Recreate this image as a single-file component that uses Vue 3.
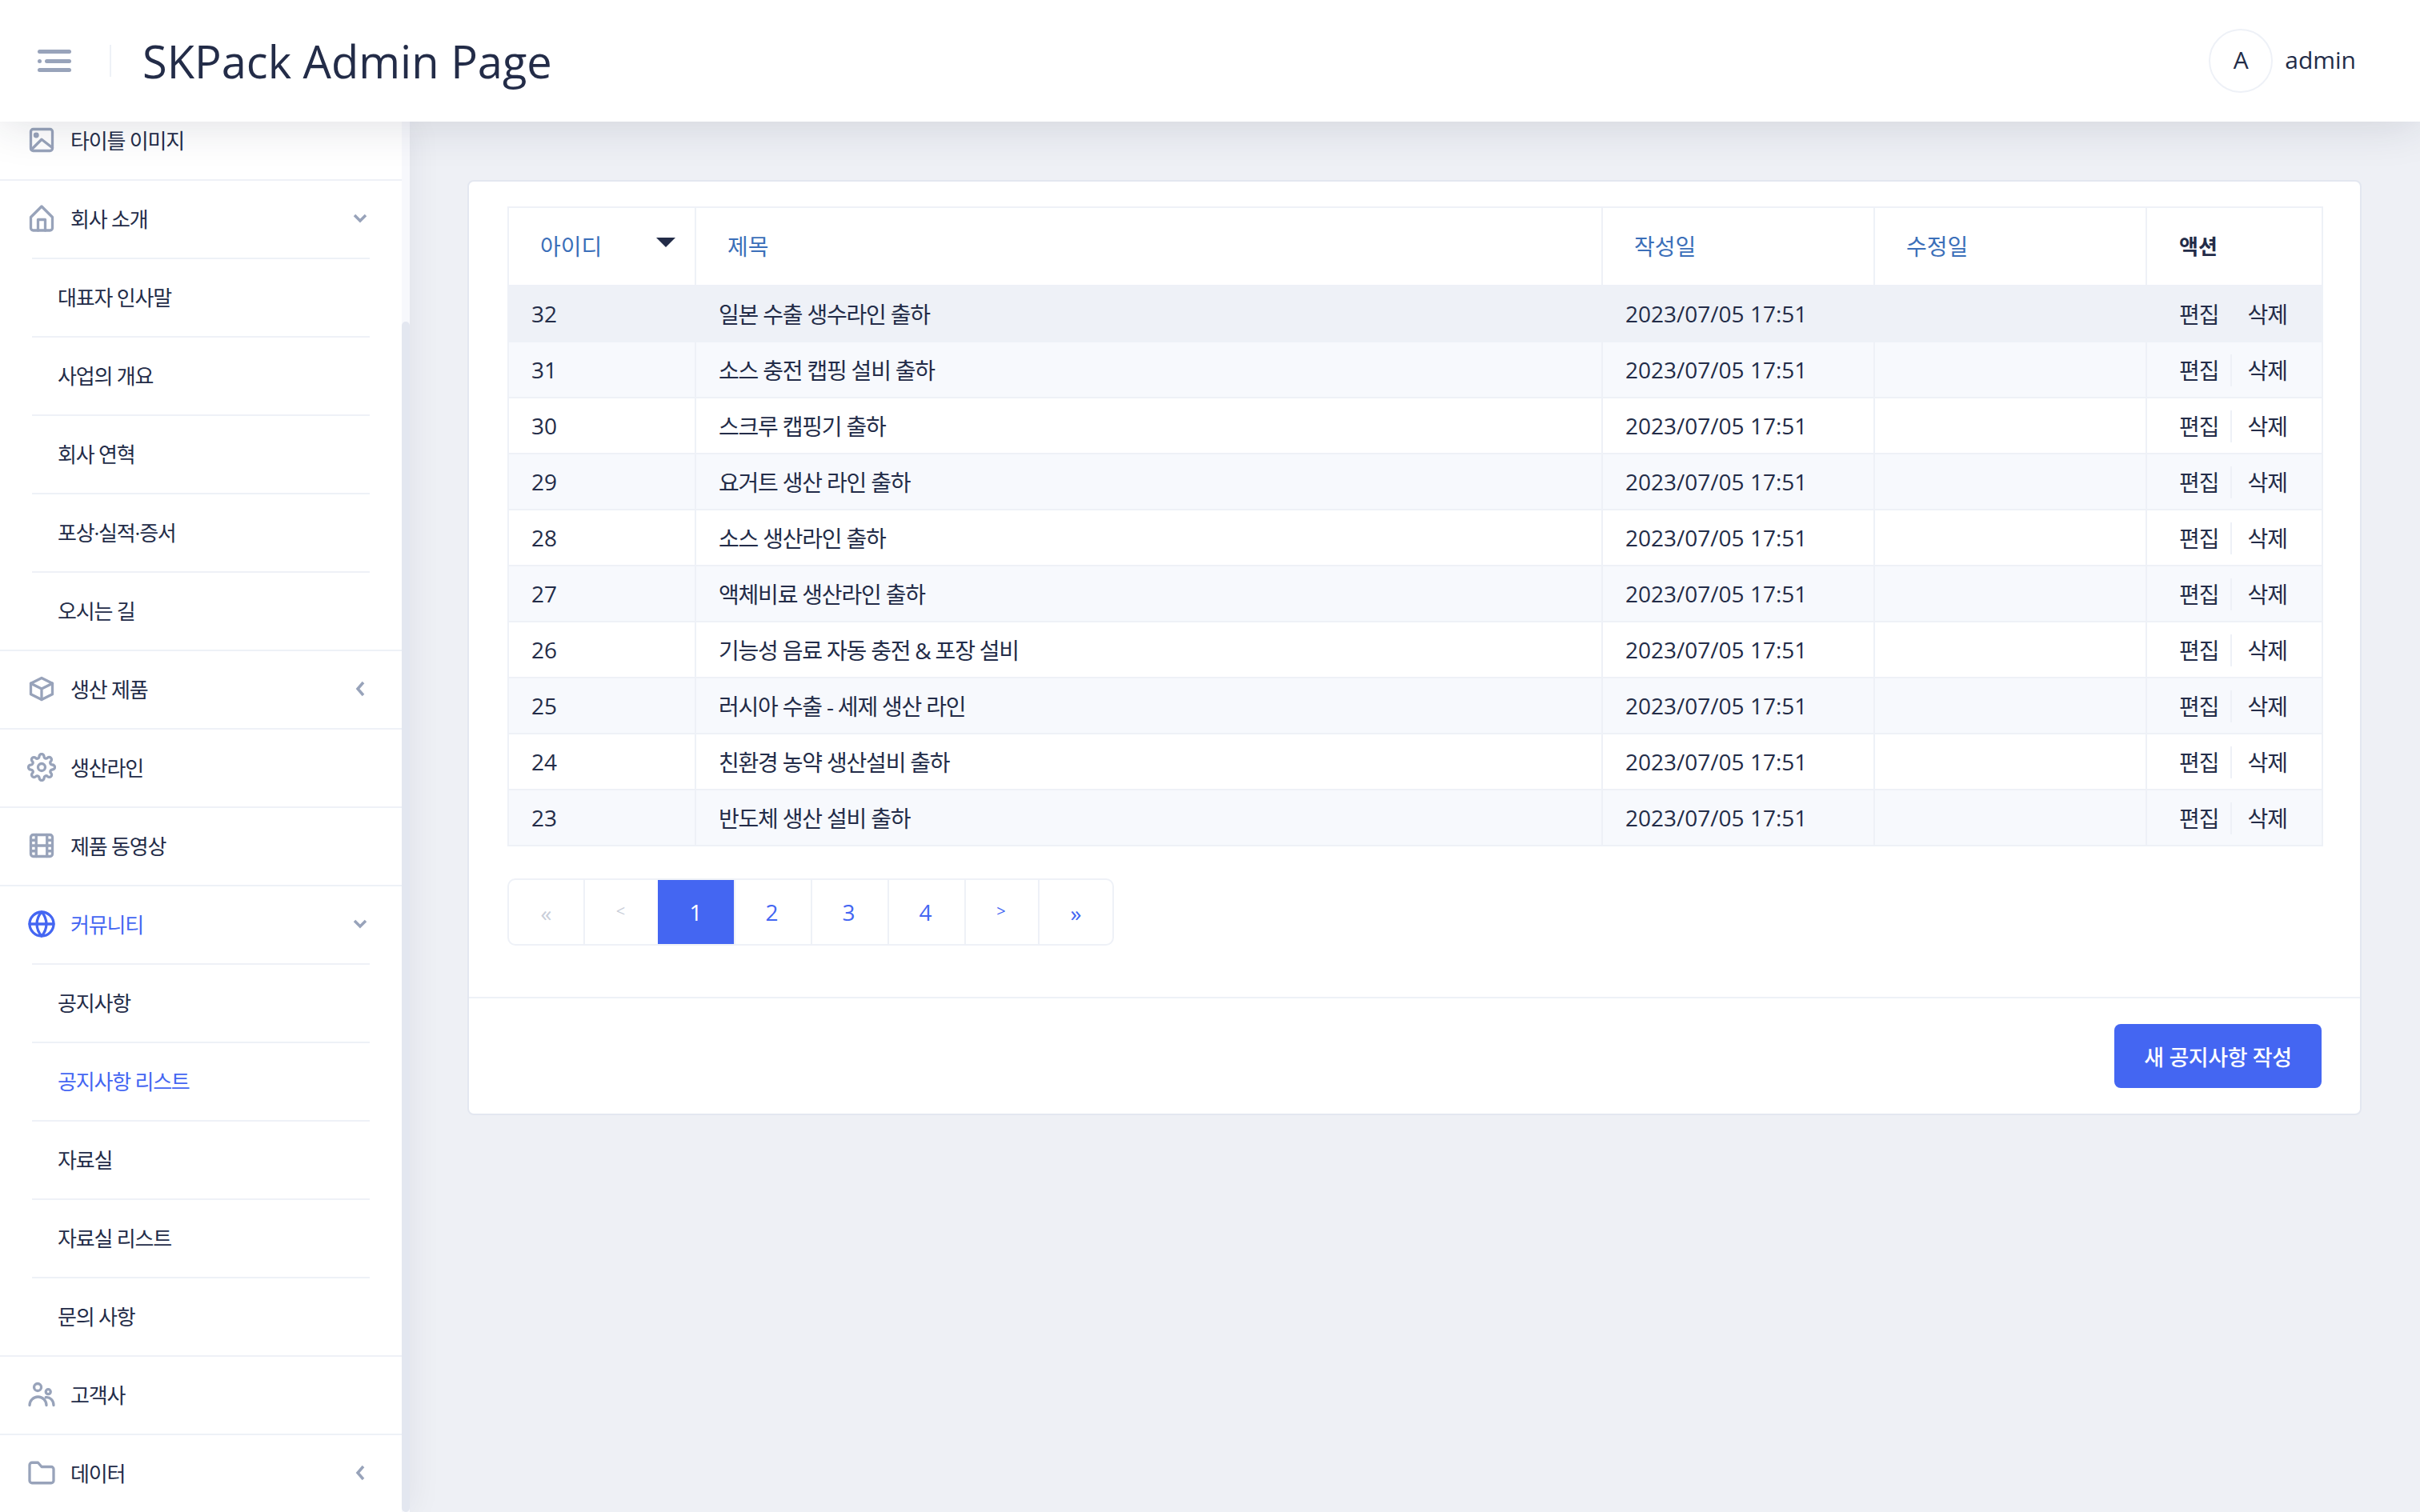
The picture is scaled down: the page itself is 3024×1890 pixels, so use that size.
<script setup>
const icons = {
  image: '<rect x="3" y="3" width="18" height="18" rx="2"/><circle cx="7.5" cy="8" r="1.2"/><path d="M3.5 20 12 11.5 21 18.5"/>',
  home: '<path d="M3 11 12 2l9 9v9a2 2 0 0 1-2 2H5a2 2 0 0 1-2-2z"/><path d="M9 22V13h6v9"/>',
  box: '<path d="M12 3l9 4.5v9L12 21l-9-4.5v-9z"/><path d="M3 7.5 12 12l9-4.5M12 12v9"/>',
  gear: '<circle cx="12" cy="12" r="3"/><path d="M19.4 15a1.65 1.65 0 0 0 .33 1.82l.06.06a2 2 0 0 1 0 2.83 2 2 0 0 1-2.83 0l-.06-.06a1.65 1.65 0 0 0-1.82-.33 1.65 1.65 0 0 0-1 1.51V21a2 2 0 0 1-2 2 2 2 0 0 1-2-2v-.09A1.65 1.65 0 0 0 9 19.4a1.65 1.65 0 0 0-1.82.33l-.06.06a2 2 0 0 1-2.83 0 2 2 0 0 1 0-2.83l.06-.06a1.65 1.65 0 0 0 .33-1.82 1.65 1.65 0 0 0-1.51-1H3a2 2 0 0 1-2-2 2 2 0 0 1 2-2h.09A1.65 1.65 0 0 0 4.6 9a1.65 1.65 0 0 0-.33-1.82l-.06-.06a2 2 0 0 1 0-2.83 2 2 0 0 1 2.83 0l.06.06a1.65 1.65 0 0 0 1.82.33H9a1.65 1.65 0 0 0 1-1.51V3a2 2 0 0 1 2-2 2 2 0 0 1 2 2v.09a1.65 1.65 0 0 0 1 1.51 1.65 1.65 0 0 0 1.82-.33l.06-.06a2 2 0 0 1 2.83 0 2 2 0 0 1 0 2.83l-.06.06a1.65 1.65 0 0 0-.33 1.82V9a1.65 1.65 0 0 0 1.51 1H21a2 2 0 0 1 2 2 2 2 0 0 1-2 2h-.09a1.65 1.65 0 0 0-1.51 1z"/>',
  film: '<rect x="3" y="3" width="18" height="18" rx="2"/><path d="M7.5 3v18M16.5 3v18M3 12h18M3 7.5h4.500M3 16.500h4.500M16.500 16.500H21M16.500 7.500H21"/>',
  globe: '<circle cx="12" cy="12" r="10"/><path d="M2 12h20M12 2a15.300 15.300 0 0 1 4 10 15.300 15.300 0 0 1-4 10 15.300 15.300 0 0 1-4-10 15.300 15.300 0 0 1 4-10z"/>',
  users: '<circle cx="8.700" cy="6" r="3"/><circle cx="17.500" cy="9.800" r="2"/><path d="M2 21a7 7 0 0 1 14 0M15.500 14.500c3.500-.5 6.500 2.500 6.500 6.500"/>',
  folder: '<path d="M2 5.500a2 2 0 0 1 2-2h5l3 3.500h8a2 2 0 0 1 2 2v9.500a2 2 0 0 1-2 2H4a2 2 0 0 1-2-2z"/>',
}

const menu = [
  { label: '타이틀 이미지', icon: 'image' },
  { label: '회사 소개', icon: 'home', arrow: 'down', inset: true },
  { label: '대표자 인사말', sub: true, inset: true },
  { label: '사업의 개요', sub: true, inset: true },
  { label: '회사 연혁', sub: true, inset: true },
  { label: '포상·실적·증서', sub: true, inset: true },
  { label: '오시는 길', sub: true },
  { label: '생산 제품', icon: 'box', arrow: 'left' },
  { label: '생산라인', icon: 'gear' },
  { label: '제품 동영상', icon: 'film' },
  { label: '커뮤니티', icon: 'globe', arrow: 'down', inset: true, active: true },
  { label: '공지사항', sub: true, inset: true },
  { label: '공지사항 리스트', sub: true, inset: true, active: true },
  { label: '자료실', sub: true, inset: true },
  { label: '자료실 리스트', sub: true, inset: true },
  { label: '문의 사항', sub: true },
  { label: '고객사', icon: 'users' },
  { label: '데이터', icon: 'folder', arrow: 'left' },
]

const rows = [
  { id: 32, title: '일본 수출 생수라인 출하' },
  { id: 31, title: '소스 충전 캡핑 설비 출하' },
  { id: 30, title: '스크루 캡핑기 출하' },
  { id: 29, title: '요거트 생산 라인 출하' },
  { id: 28, title: '소스 생산라인 출하' },
  { id: 27, title: '액체비료 생산라인 출하' },
  { id: 26, title: '기능성 음료 자동 충전 & 포장 설비' },
  { id: 25, title: '러시아 수출 - 세제 생산 라인' },
  { id: 24, title: '친환경 농약 생산설비 출하' },
  { id: 23, title: '반도체 생산 설비 출하' },
]

const pages = [
  { text: '«', kind: 'wide', disabled: true },
  { text: '<', kind: 'arrow', disabled: true },
  { text: '1', active: true },
  { text: '2', kind: 'num' },
  { text: '3', kind: 'num' },
  { text: '4', kind: 'num' },
  { text: '>', kind: 'arrow' },
  { text: '»', kind: 'wide' },
]
</script>

<template>
  <div class="app">
    <header class="topbar">
      <button class="burger">
        <span class="bar"></span>
        <span class="bar mid"><i></i><b></b></span>
        <span class="bar"></span>
      </button>
      <span class="divider"></span>
      <h1 class="brand">SKPack Admin Page</h1>
      <div class="user">
        <span class="avatar">A</span>
        <span class="username">admin</span>
      </div>
    </header>

    <div class="body">
      <aside class="sidebar">
        <nav class="nav">
          <a
            v-for="item in menu"
            :key="item.label"
            class="row"
            :class="{ sub: item.sub, inset: item.inset, active: item.active }"
          >
            <svg v-if="item.icon" class="icon" viewBox="0 0 24 24" v-html="icons[item.icon]" />
            <span class="label">{{ item.label }}</span>
            <svg v-if="item.arrow" class="chevron" viewBox="0 0 20 20">
              <path v-if="item.arrow === 'down'" d="M3 6l7 7 7-7" />
              <path v-else d="M14 2l-7 8 7 8" />
            </svg>
          </a>
        </nav>
        <div class="track"><div class="thumb"></div></div>
      </aside>

      <main class="main">
        <section class="card">
          <div class="card-body">
            <table class="table">
              <colgroup>
                <col style="width: 234px" />
                <col style="width: 1133px" />
                <col style="width: 340px" />
                <col style="width: 340px" />
                <col style="width: 220px" />
              </colgroup>
              <thead>
                <tr>
                  <th class="sorted">아이디<span class="caret"></span></th>
                  <th>제목</th>
                  <th>작성일</th>
                  <th>수정일</th>
                  <th class="plain">액션</th>
                </tr>
              </thead>
              <tbody>
                <tr v-for="(row, i) in rows" :key="row.id" :class="{ hover: i === 0, odd: i % 2 === 1 }">
                  <td>{{ row.id }}</td>
                  <td class="title">{{ row.title }}</td>
                  <td>2023/07/05 17:51</td>
                  <td></td>
                  <td class="actions">
                    <a class="edit">편집</a><a class="del">삭제</a>
                  </td>
                </tr>
              </tbody>
            </table>

            <ul class="pager">
              <li
                v-for="p in pages"
                :key="p.text"
                :class="[p.kind, { active: p.active, disabled: p.disabled }]"
              >{{ p.text }}</li>
            </ul>
          </div>
          <div class="card-foot">
            <button class="primary">새 공지사항 작성</button>
          </div>
        </section>
      </main>
    </div>
  </div>
</template>

<style>
html, body { margin: 0; background: #eef0f5; }
</style>

<style scoped>
.app {
  width: 3024px;
  height: 1890px;
  display: flex;
  flex-direction: column;
  overflow: hidden;
  font-family: "Open Sans", "Noto Sans CJK KR", sans-serif;
  font-size: 28px;
  color: #232c48;
  background: #eef0f5;
}

.topbar {
  position: relative;
  z-index: 3;
  height: 152px;
  flex: none;
  display: flex;
  align-items: center;
  background: #fff;
  box-shadow: 0 0 60px rgba(30, 35, 60, 0.16);
}
.burger {
  width: 42px;
  height: 28px;
  margin-left: 47px;
  padding: 0;
  border: 0;
  background: none;
  display: flex;
  flex-direction: column;
  justify-content: space-between;
}
.bar {
  display: block;
  height: 5px;
  border-radius: 3px;
  background: #98a3ba;
}
.bar.mid {
  display: flex;
  gap: 4px;
  background: none;
}
.bar.mid i {
  width: 5px;
  border-radius: 50%;
  background: #98a3ba;
}
.bar.mid b {
  flex: 1;
  border-radius: 3px;
  background: #98a3ba;
}
.divider {
  width: 2px;
  height: 40px;
  margin-left: 48px;
  background: #eef1f7;
}
.brand {
  margin: 0 0 0 39px;
  font-size: 56px;
  font-weight: 400;
  line-height: 1;
}
.user {
  margin-left: auto;
  margin-right: 80px;
  display: flex;
  align-items: center;
  gap: 15px;
  font-size: 30px;
  line-height: 38px;
}
.username {
  margin-bottom: 3px;
}
.avatar {
  width: 80px;
  height: 80px;
  box-sizing: border-box;
  padding-bottom: 2px;
  margin-left: -2px;
  border: 2px solid #eef1f7;
  border-radius: 50%;
  display: flex;
  align-items: center;
  justify-content: center;
}

.body {
  flex: 1;
  min-height: 0;
  display: flex;
}

.sidebar {
  position: relative;
  z-index: 2;
  width: 512px;
  flex: none;
  display: flex;
  background: #fff;
  box-shadow: 0 0 40px rgba(30, 35, 60, 0.07);
  overflow: hidden;
}
.nav {
  width: 502px;
  flex: none;
  margin-top: -24px;
}
.row {
  position: relative;
  box-sizing: border-box;
  height: 98px;
  display: flex;
  align-items: center;
  padding-left: 34px;
  padding-bottom: 2px;
  border-bottom: 2px solid #eef1f7;
  font-size: 26px;
  font-weight: 400;
  letter-spacing: -1.2px;
}
.row.sub {
  padding-left: 72px;
}
.row.inset {
  border-bottom-color: transparent;
}
.row.inset::after {
  content: "";
  position: absolute;
  left: 40px;
  right: 40px;
  bottom: -2px;
  height: 2px;
  background: #eef1f7;
}
.row.active {
  color: #4466f2;
}
.icon {
  width: 36px;
  height: 36px;
  flex: none;
  margin-right: 18px;
  fill: none;
  stroke: #98a3ba;
  stroke-width: 2.2;
  stroke-linecap: round;
  stroke-linejoin: round;
}
.row.active .icon {
  stroke: #4466f2;
}
.chevron {
  width: 20px;
  height: 20px;
  margin-left: auto;
  margin-right: 42px;
  fill: none;
  stroke: #98a3ba;
  stroke-width: 3.5;
}
.track {
  width: 10px;
  background: #f7f8fc;
}
.thumb {
  height: 1488px;
  margin-top: 250px;
  border-radius: 5px;
  background: #e3e7f0;
}

.main {
  flex: 1;
  min-width: 0;
  padding: 73px 73px 0 72px;
}
.card {
  box-sizing: border-box;
  border: 2px solid #e3e7f0;
  border-radius: 8px;
  background: #fff;
}
.card-body {
  padding: 31px 48px 64px;
  border-bottom: 2px solid #eef1f7;
}
.card-foot {
  display: flex;
  justify-content: flex-end;
  padding: 32px 48px;
}

.table {
  width: 2267px;
  table-layout: fixed;
  border-collapse: collapse;
  border: 2px solid #eef1f7;
}
.table th,
.table td {
  box-sizing: border-box;
  border: 2px solid #eef1f7;
  text-align: left;
  white-space: nowrap;
}
.table th {
  position: relative;
  height: 98px;
  padding: 0 0 2px 39px;
  font-weight: 400;
  color: #3b6fb9;
}
.table th.plain {
  padding-left: 40px;
  font-weight: 700;
  font-size: 26px;
  color: #232c48;
}
.table td {
  height: 70px;
  padding: 0 0 0 28px;
}
.table td.title {
  letter-spacing: -1.2px;
}
.table tr.odd td {
  background: #f7f9fd;
}
.table tr.hover td {
  background: #eef1f7;
}
.caret {
  position: absolute;
  top: 37px;
  right: 24px;
  width: 0;
  height: 0;
  border-left: 12px solid transparent;
  border-right: 12px solid transparent;
  border-top: 12px solid #232c48;
}
.actions a {
  display: inline-block;
  line-height: 40px;
  height: 40px;
  vertical-align: middle;
  letter-spacing: -1px;
}
.actions {
  padding-left: 40px !important;
}
.edit {
  padding-right: 14px;
  border-right: 2px solid #eef1f7;
}
.del {
  padding-left: 20px;
}

.pager {
  display: inline-flex;
  margin: 40px 0 0;
  padding: 0;
  list-style: none;
  border: 2px solid #eef1f7;
  border-radius: 10px;
  overflow: hidden;
  vertical-align: top;
}
.pager li {
  box-sizing: border-box;
  width: 96px;
  height: 80px;
  display: flex;
  align-items: center;
  justify-content: center;
  border-left: 2px solid #eef1f7;
  color: #4466f2;
}
.pager li:first-child {
  width: 94px;
  border-left: 0;
}
.pager li.num {
  padding-right: 3px;
}
.pager li.arrow {
  width: 92px;
  font-size: 20px;
  padding-bottom: 4px;
  padding-right: 2px;
}
.pager li:nth-child(2) {
  width: 93px;
}
.pager li.wide {
  width: 93px;
  padding-top: 2px;
}
.pager li.active {
  background: #4466f2;
  color: #fff;
  border-left: 0;
  width: 95px;
}
.pager li.disabled {
  color: #c9ced9;
}

.primary {
  width: 259px;
  height: 80px;
  border: 0;
  border-radius: 8px;
  background: #4466f2;
  color: #fff;
  font: inherit;
  font-weight: 500;
  font-size: 27px;
  letter-spacing: -0.4px;
}
</style>
